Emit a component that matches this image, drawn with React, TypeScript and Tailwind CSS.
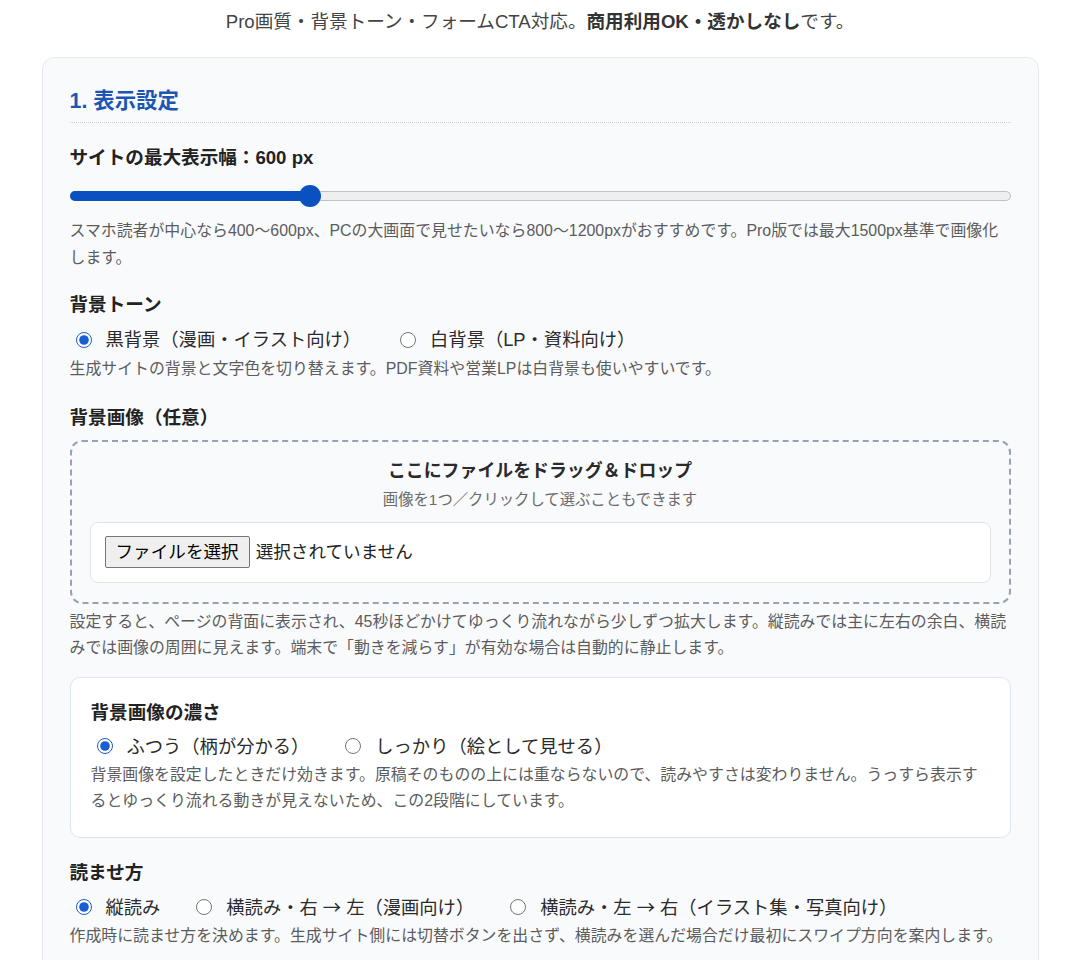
import { useState } from "react";

type Option = { value: string; label: React.ReactNode };

// the arrow glyph is taken from the CJK face so it sits at mid-height like the kana around it
const Arrow = () => <span className="font-['Noto_Sans_CJK_JP',sans-serif]">→</span>;

const toneOptions: Option[] = [
  { value: "dark", label: "黒背景（漫画・イラスト向け）" },
  { value: "light", label: "白背景（LP・資料向け）" },
];

const strengthOptions: Option[] = [
  { value: "normal", label: "ふつう（柄が分かる）" },
  { value: "strong", label: "しっかり（絵として見せる）" },
];

const readOptions: Option[] = [
  { value: "vertical", label: "縦読み" },
  {
    value: "rtl",
    label: (
      <>
        横読み・右 <Arrow /> 左（漫画向け）
      </>
    ),
  },
  {
    value: "ltr",
    label: (
      <>
        横読み・左 <Arrow /> 右（イラスト集・写真向け）
      </>
    ),
  },
];

const SectionTitle = ({ children }: { children: React.ReactNode }) => (
  <h3 className="text-[18.6px] font-bold leading-[27px] text-[#222]">{children}</h3>
);

const Helper = ({ children, className = "" }: { children: React.ReactNode; className?: string }) => (
  <p className={`text-[15.9px] leading-[26.5px] text-[#5c5c5c] ${className}`}>{children}</p>
);

const RadioRow = ({
  name,
  options,
  value,
  onChange,
  className = "mt-[8px] gap-x-[30px]",
}: {
  name: string;
  options: Option[];
  value: string;
  onChange: (v: string) => void;
  className?: string;
}) => (
  <div className={`flex h-[27px] items-center ${className}`}>
    {options.map((opt) => (
      <label key={opt.value} className="flex cursor-pointer items-center">
        <input
          type="radio"
          name={name}
          value={opt.value}
          checked={value === opt.value}
          onChange={() => onChange(opt.value)}
          className="m-0 ml-[6px] size-4 accent-[#1a5fd0]"
        />
        <span className="ml-[14px] text-[18.3px] leading-[27px] text-[#2b2b2b]">{opt.label}</span>
      </label>
    ))}
  </div>
);

const WidthSlider = ({ value, min, max }: { value: number; min: number; max: number }) => {
  const pct = (value - min) / (max - min);
  return (
    <div className="relative mt-[14px] h-[22px]">
      <div className="absolute top-[6px] right-0 left-0 h-[10px] rounded-full border border-[#c2c2c2] bg-[#efefef]" />
      <div
        className="absolute top-[6px] left-0 h-[10px] rounded-full bg-[#0b50c0]"
        style={{ width: `calc(${pct} * (100% - 22px) + 11px)` }}
      />
      <div
        className="absolute top-0 size-[22px] rounded-full bg-[#0b50c0]"
        style={{ left: `calc(${pct} * (100% - 22px))` }}
      />
    </div>
  );
};

export default function App() {
  const [tone, setTone] = useState("dark");
  const [strength, setStrength] = useState("normal");
  const [readMode, setReadMode] = useState("vertical");

  return (
    <div className="min-h-screen bg-white font-['Liberation_Sans','Noto_Sans_CJK_JP',sans-serif]">
      <p className="pt-[8px] text-center text-[18.6px] leading-[27px] text-[#444]">
        Pro画質・背景トーン・フォームCTA対応。
        <strong className="font-bold text-[#333]">商用利用OK・透かしなし</strong>
        です。
      </p>

      <section className="mx-auto mt-[22px] w-[997px] rounded-[12px] border border-[#e5e9ef] bg-[#f8fafc] px-[27px] pt-[28px] pb-[40px]">
        <h2 className="border-b border-dotted border-[#c9cfd8] pb-[6px] text-[21.4px] font-bold leading-[30px] text-[#1d55b4]">
          1. 表示設定
        </h2>

        <div className="mt-[21px]">
          <SectionTitle>サイトの最大表示幅：600 px</SectionTitle>
          <WidthSlider value={600} min={300} max={1500} />
          <Helper className="mt-[11px]">
            スマホ読者が中心なら400〜600px、PCの大画面で見せたいなら800〜1200pxがおすすめです。Pro版では最大1500px基準で画像化します。
          </Helper>
        </div>

        <div className="mt-[20px]">
          <SectionTitle>背景トーン</SectionTitle>
          <RadioRow
            name="tone"
            options={toneOptions}
            value={tone}
            onChange={setTone}
            className="mt-[8px] gap-x-[33px]"
          />
          <Helper className="mt-[3px]">
            生成サイトの背景と文字色を切り替えます。PDF資料や営業LPは白背景も使いやすいです。
          </Helper>
        </div>

        <div className="mt-[21px]">
          <SectionTitle>背景画像（任意）</SectionTitle>
          <div className="mt-[9px] rounded-[12px] border-2 border-dashed border-[#97a3b5] px-[18px] pt-[16px] pb-[19px] text-center">
            <p className="text-[17.9px] font-bold leading-[27px] text-[#2a2a2a]">ここにファイルをドラッグ＆ドロップ</p>
            <p className="mt-[3px] text-[15.35px] leading-[24px] text-[#6b6b6b]">画像を1つ／クリックして選ぶこともできます</p>
            <div className="mt-[10px] flex h-[61px] items-center rounded-[8px] border border-[#e0e3e8] bg-white px-[14px]">
              <span className="flex h-[32px] items-center rounded-[2px] border border-[#767676] bg-[#efefef] px-[10px] text-[17.6px] text-black">
                ファイルを選択
              </span>
              <span className="ml-[6px] text-[17.6px] text-[#222]">選択されていません</span>
            </div>
          </div>
          <Helper className="mt-[5px]">
            設定すると、ページの背面に表示され、45秒ほどかけてゆっくり流れながら少しずつ拡大します。縦読みでは主に左右の余白、横読みでは画像の周囲に見えます。端末で「動きを減らす」が有効な場合は自動的に静止します。
          </Helper>
        </div>

        <div className="mt-[15px] rounded-[10px] border border-[#dbe5f3] bg-white px-[20px] pt-[21px] pb-[22px]">
          <SectionTitle>背景画像の濃さ</SectionTitle>
          <RadioRow
            name="strength"
            options={strengthOptions}
            value={strength}
            onChange={setStrength}
            className="mt-[7px] gap-x-[30px]"
          />
          <Helper className="mt-[2px]">
            背景画像を設定したときだけ効きます。原稿そのものの上には重ならないので、読みやすさは変わりません。うっすら表示するとゆっくり流れる動きが見えないため、この2段階にしています。
          </Helper>
        </div>

        <div className="mt-[21px]">
          <SectionTitle>読ませ方</SectionTitle>
          <RadioRow name="read" options={readOptions} value={readMode} onChange={setReadMode} />
          <Helper className="mt-[2px]">
            作成時に読ませ方を決めます。生成サイト側には切替ボタンを出さず、横読みを選んだ場合だけ最初にスワイプ方向を案内します。
          </Helper>
        </div>
      </section>
    </div>
  );
}
